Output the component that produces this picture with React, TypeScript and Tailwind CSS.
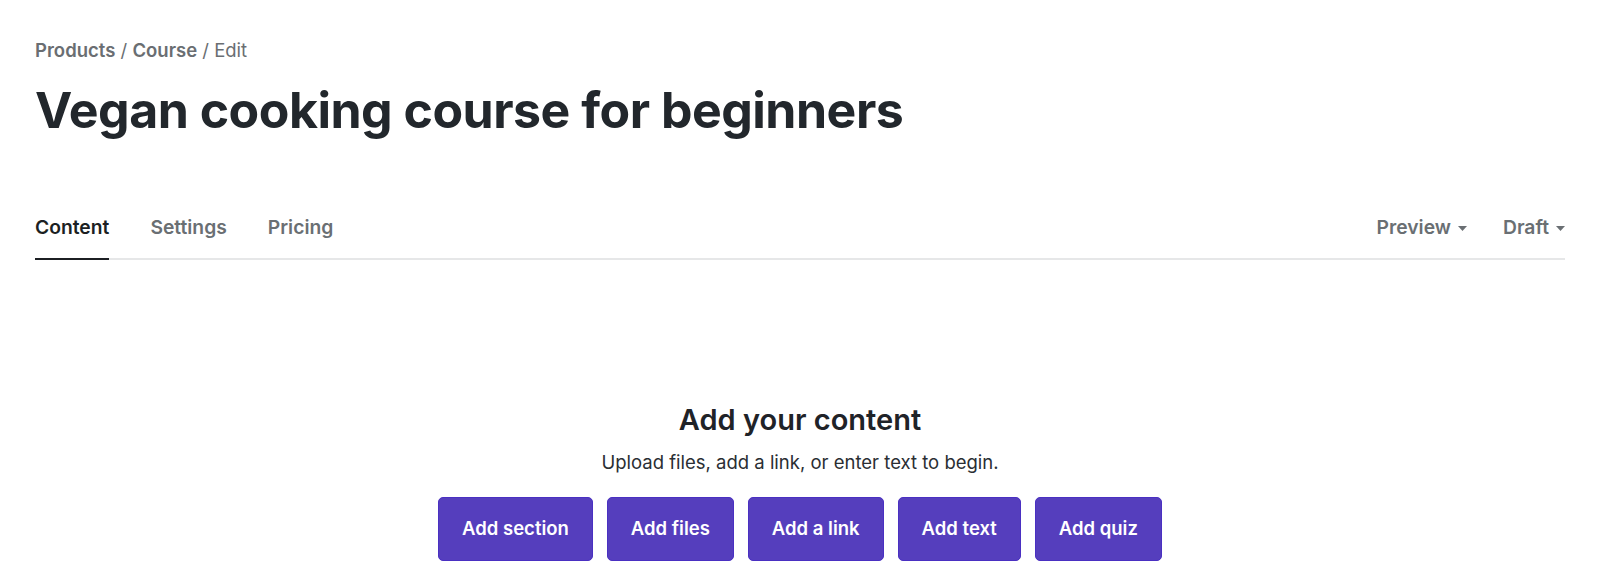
import { useState } from 'react';

const tabs = ['Content', 'Settings', 'Pricing'];
const actions = ['Add section', 'Add files', 'Add a link', 'Add text', 'Add quiz'];

function Caret() {
  return (
    <svg width="9" height="5" viewBox="0 0 9 5" className="ml-[7px] mt-[2px] fill-current">
      <path d="M0 0h9L4.5 5z" />
    </svg>
  );
}

export default function App() {
  const [activeTab, setActiveTab] = useState('Content');

  return (
    <div className="min-h-[587px] bg-white px-[35px] font-['Inter','Liberation_Sans',sans-serif] text-[#22272c]">
      {/* header */}
      <div className="pt-[37px] text-[18.5px] leading-[26px] text-[#6a6e72]">
        <span className="font-semibold">Products</span> / <span className="font-semibold">Course</span> /{' '}
        <span>Edit</span>
      </div>
      <h1 className="mt-[19px] text-[50px] font-bold leading-[56px] tracking-[-0.5px] text-[#22272c]">
        Vegan cooking course for beginners
      </h1>

      {/* tabs */}
      <div className="mt-[76px] flex items-end justify-between border-b-2 border-[#e6e7e8]">
        <div className="flex gap-[41px]">
          {tabs.map((tab) => (
            <button
              key={tab}
              onClick={() => setActiveTab(tab)}
              className={
                'mb-[-2px] border-b-2 pb-[18px] text-[19.3px] font-semibold leading-[26px] ' +
                (activeTab === tab ? 'border-[#1c1f23] text-[#1c1f23]' : 'border-transparent text-[#6a6f73]')
              }
            >
              {tab}
            </button>
          ))}
        </div>
        <div className="flex gap-[36px] pb-[18px] text-[19.3px] font-semibold leading-[26px] text-[#6a6f73]">
          <button className="flex items-center">
            Preview
            <Caret />
          </button>
          <button className="flex items-center">
            Draft
            <Caret />
          </button>
        </div>
      </div>

      {/* empty state */}
      <div className="flex flex-col items-center pt-[141px]">
        <h2 className="text-[29px] font-semibold leading-[38px] text-[#1f2328]">Add your content</h2>
        <p className="mt-[10px] text-[18.5px] leading-[26px] text-[#2a2e33]">
          Upload files, add a link, or enter text to begin.
        </p>
        <div className="mt-[22px] flex gap-[14px]">
          {actions.map((label) => (
            <button
              key={label}
              className="h-[64px] rounded-[5px] border border-[#4a30c2] bg-[#553ebd] px-[23px] text-[18.5px] font-semibold text-white"
            >
              {label}
            </button>
          ))}
        </div>
      </div>
    </div>
  );
}
